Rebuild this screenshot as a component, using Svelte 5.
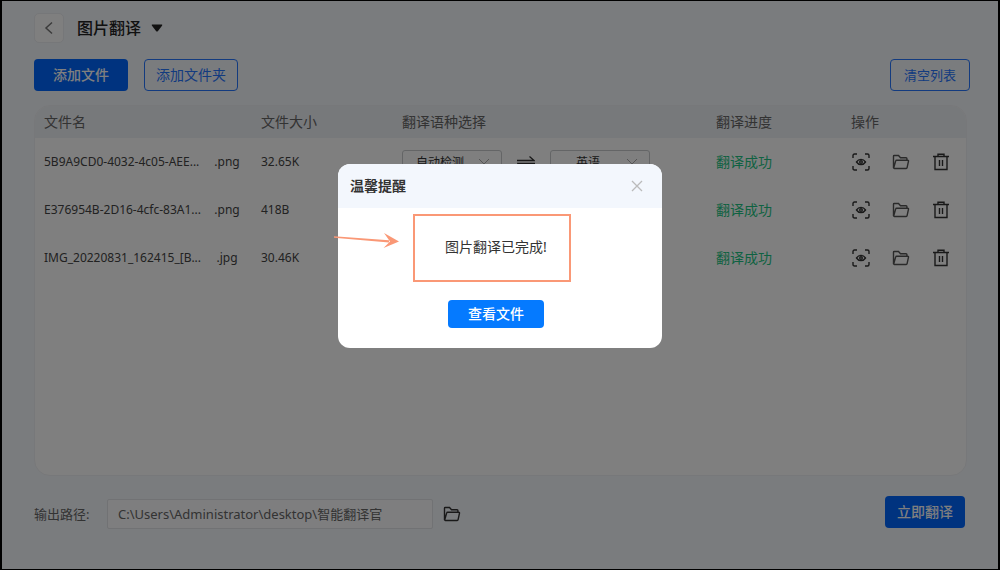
<script lang="ts">
  type FileRow = {
    id: number;
    name: string;
    ext: string;
    size: string;
    from: string;
    to: string;
  };

  let files = $state<FileRow[]>([
    { id: 1, name: "5B9A9CD0-4032-4c05-AEE...", ext: ".png", size: "32.65K", from: "自动检测", to: "英语" },
    { id: 2, name: "E376954B-2D16-4cfc-83A1...", ext: ".png", size: "418B", from: "自动检测", to: "英语" },
    { id: 3, name: "IMG_20220831_162415_[B...", ext: ".jpg", size: "30.46K", from: "自动检测", to: "英语" },
  ]);
  let outputPath = $state("C:\\Users\\Administrator\\desktop\\智能翻译官");
  let showDialog = $state(true);

  function removeFile(id: number) {
    files = files.filter((f) => f.id !== id);
  }
</script>

{#snippet folderIcon()}
  <svg class="icon" viewBox="0 0 18 18" aria-hidden="true">
    <path d="M1.5 15V3.2c0-.5.3-.7.7-.7h4.3l2 2.2h5.6c.5 0 .8.3.8.8v1.7M1.6 15.2l2.1-7.3c.1-.4.4-.6.8-.6h11.2c.6 0 .9.4.8.9l-1.4 6.5c-.1.5-.4.8-.9.8H2.3c-.5 0-.7-.2-.7-.6z" />
  </svg>
{/snippet}

{#snippet chevron()}
  <svg class="chevron" viewBox="0 0 12 8" aria-hidden="true">
    <path d="M1 1l5 5 5-5" />
  </svg>
{/snippet}

<div class="window">
  <header class="title-bar">
    <button class="back" aria-label="返回">
      <svg viewBox="0 0 10 14" aria-hidden="true"><path d="M8 1.5L2 7l6 5.5" /></svg>
    </button>
    <button class="mode">
      图片翻译
      <svg viewBox="0 0 12 8" aria-hidden="true"><path d="M1.5.5h9c.8 0 1 .6.5 1.2L7 7c-.6.7-1.4.7-2 0L1 1.7C.5 1.1.7.5 1.5.5z" /></svg>
    </button>
  </header>

  <div class="toolbar">
    <button class="btn primary">添加文件</button>
    <button class="btn outline">添加文件夹</button>
    <button class="btn outline clear" onclick={() => (files = [])}>清空列表</button>
  </div>

  <main class="card">
    <table>
      <thead>
        <tr>
          <th class="col-name">文件名</th>
          <th class="col-size">文件大小</th>
          <th>翻译语种选择</th>
          <th class="col-status">翻译进度</th>
          <th class="col-actions">操作</th>
        </tr>
      </thead>
      <tbody>
        {#each files as file (file.id)}
          <tr>
            <td>
              <div class="file">
                <span class="file-name">{file.name}</span>
                <span class="file-ext">{file.ext}</span>
              </div>
            </td>
            <td class="size">{file.size}</td>
            <td class="controls">
              <div class="langs">
                <div class="select">
                  <select bind:value={file.from} aria-label="源语言">
                    <option>自动检测</option>
                  </select>
                  {@render chevron()}
                </div>
                <svg class="swap" viewBox="0 0 18 12" aria-hidden="true">
                  <path d="M0 4.5h17L12.5.5M18 7.5H1l4.5 4" />
                </svg>
                <div class="select">
                  <select bind:value={file.to} aria-label="目标语言">
                    <option>英语</option>
                  </select>
                  {@render chevron()}
                </div>
              </div>
            </td>
            <td class="status">翻译成功</td>
            <td class="controls">
              <div class="actions">
                <button class="icon-btn" aria-label="预览">
                  <svg class="icon" viewBox="0 0 18 18" aria-hidden="true">
                    <path d="M1 5V2.5C1 1.5 1.5 1 2.5 1H5M13 1h2.5c1 0 1.5.5 1.5 1.5V5M17 13v2.5c0 1-.5 1.5-1.5 1.5H13M5 17H2.5C1.5 17 1 16.500 1 15.500V13" />
                    <path d="M4.5 9C6.8 5.500 11.200 5.500 13.500 9 11.200 12.500 6.800 12.500 4.500 9z" />
                    <circle cx="9" cy="9" r="1.3" />
                  </svg>
                </button>
                <button class="icon-btn folder" aria-label="打开文件夹">{@render folderIcon()}</button>
                <button class="icon-btn" aria-label="删除" onclick={() => removeFile(file.id)}>
                  <svg class="icon" viewBox="0 0 18 18" aria-hidden="true">
                    <path d="M1 3.500h16M6 3.300V1.300h6v2M3 3.500v13h12v-13M7.500 7v6M10.500 7v6" />
                  </svg>
                </button>
              </div>
            </td>
          </tr>
        {/each}
      </tbody>
    </table>
  </main>

  <footer>
    <div class="path">
      <label for="output-path">输出路径:</label>
      <input id="output-path" type="text" bind:value={outputPath} spellcheck="false" />
      <button class="icon-btn" aria-label="选择输出路径">{@render folderIcon()}</button>
    </div>
    <button class="btn primary start">立即翻译</button>
  </footer>

  {#if showDialog}
    <div class="overlay">
      <div class="dialog" role="dialog" aria-modal="true" aria-labelledby="dialog-title">
        <div class="dialog-head">
          <h2 id="dialog-title">温馨提醒</h2>
          <button class="close" aria-label="关闭" onclick={() => (showDialog = false)}>
            <svg viewBox="0 0 12 12" aria-hidden="true"><path d="M1 1l10 10M11 1L1 11" /></svg>
          </button>
        </div>
        <div class="dialog-body">
          <p>图片翻译已完成!</p>
          <button class="view" onclick={() => (showDialog = false)}>查看文件</button>
        </div>
        <!-- highlight box and arrow over the message -->
        <svg class="callout" viewBox="0 0 240 72" aria-hidden="true">
          <rect x="81" y="3" width="156" height="66" />
          <path d="M1 24.2L1 25.8 56 30.5 56 28.3z" />
          <path d="M51 21L66 29.5 50.5 36 57 29.5z" />
        </svg>
      </div>
    </div>
  {/if}
</div>

<style>
  :global(body) {
    margin: 0;
  }
  .window {
    position: relative;
    box-sizing: border-box;
    display: flex;
    flex-direction: column;
    min-height: 100vh;
    padding: 12px 31px 40px 32px;
    border: solid #000;
    border-width: 1px 2px;
    background: #f5f8fd;
    color: #333;
    font-family: "Noto Sans", "Noto Sans CJK SC", sans-serif;
    font-size: 14px;
  }
  button,
  input,
  select {
    font: inherit;
    color: inherit;
  }
  button {
    padding: 0;
    border: none;
    background: none;
    cursor: pointer;
  }
  svg {
    display: block;
    fill: none;
    stroke: currentColor;
  }
  .title-bar {
    display: flex;
    align-items: center;
    gap: 13px;
  }
  .back {
    display: grid;
    place-items: center;
    width: 30px;
    height: 30px;
    border: 1px solid #eceef2;
    border-radius: 5px;
    background: #fff;
    color: #777;
  }
  .back svg {
    width: 10px;
    height: 14px;
    stroke-width: 1.5;
  }
  .mode {
    display: flex;
    align-items: center;
    gap: 10px;
    color: #222;
    font-size: 16px;
    font-weight: 500;
    line-height: 24px;
  }
  .mode svg {
    width: 12px;
    height: 8px;
    fill: currentColor;
    stroke: none;
  }
  .toolbar {
    display: flex;
    gap: 16px;
    margin: 16px 0 14px;
  }
  .btn {
    box-sizing: border-box;
    width: 94px;
    height: 32px;
    padding-bottom: 2px;
    border-radius: 4px;
  }
  .primary {
    background: #0066ff;
    color: #fff;
    font-weight: 500;
  }
  .outline {
    border: 1px solid #2677ff;
    color: #2677ff;
  }
  .clear {
    width: 80px;
    margin: 0 -3px 0 auto;
    font-size: 13px;
  }
  .card {
    flex: 1;
    border: 1px solid #eff1f4;
    border-radius: 16px;
    background: #fff;
    overflow: hidden;
  }
  table {
    width: 100%;
    border-collapse: collapse;
    table-layout: fixed;
  }
  th,
  td {
    padding: 0 0 2px 9px;
    text-align: left;
    font-weight: 400;
  }
  th {
    height: 30px;
    background: #eff2f6;
    color: #666;
  }
  td {
    height: 46px;
  }
  .controls {
    height: 48px;
    padding-bottom: 0;
  }
  .col-name {
    width: 208px;
  }
  .col-size {
    width: 132px;
  }
  .col-status {
    width: 126px;
  }
  .col-actions {
    width: 115px;
  }
  .file {
    display: flex;
    gap: 4px;
    color: #444;
    font-size: 12px;
  }
  .file-name {
    width: 166px;
    white-space: nowrap;
  }
  .file-ext {
    width: 26px;
    text-align: center;
  }
  .size {
    color: #444;
    font-size: 12px;
  }
  .langs {
    display: flex;
    align-items: center;
    gap: 15px;
  }
  .select {
    display: grid;
    align-items: center;
    width: 100px;
  }
  .select > :global(*) {
    grid-area: 1 / 1;
  }
  select {
    box-sizing: border-box;
    width: 100%;
    height: 24px;
    padding: 0 24px 0 0;
    appearance: none;
    border: 1px solid #c8cacd;
    border-radius: 3px;
    background: #fff;
    font-size: 12px;
    text-align: center;
    text-align-last: center;
  }
  .chevron {
    justify-self: end;
    width: 12px;
    height: 8px;
    margin-right: 12px;
    color: #aaa;
    pointer-events: none;
  }
  .swap {
    width: 18px;
    height: 12px;
    stroke-width: 1.3;
  }
  .status {
    color: #1ec584;
  }
  .actions {
    display: flex;
    gap: 22px;
    padding-left: 1px;
  }
  .icon-btn {
    color: #333;
  }
  .folder {
    color: #555;
  }
  .icon {
    width: 18px;
    height: 18px;
    stroke-width: 1.4;
  }
  footer {
    display: flex;
    align-items: flex-start;
    justify-content: space-between;
    margin-top: 20px;
  }
  .path {
    display: flex;
    align-items: center;
    padding-top: 3px;
    color: #666;
    font-size: 13px;
  }
  .path label {
    width: 73px;
    padding-bottom: 2px;
  }
  .path input {
    box-sizing: border-box;
    width: 326px;
    height: 30px;
    margin-right: 10px;
    padding: 0 10px 2px;
    border: 1px solid #e2e4e8;
    border-radius: 2px;
    background: #fcfdff;
    outline: none;
  }
  .start {
    width: 80px;
    margin-right: 2px;
  }
  .overlay {
    position: absolute;
    inset: 0;
    display: flex;
    align-items: center;
    justify-content: center;
    padding-bottom: 58px;
    background: rgba(0, 0, 0, 0.5);
  }
  .dialog {
    position: relative;
    width: 324px;
    border-radius: 12px;
    background: #fff;
  }
  .dialog-head {
    display: flex;
    align-items: center;
    justify-content: space-between;
    height: 44px;
    padding: 0 19px 0 12px;
    border-radius: 12px 12px 0 0;
    background: #f3f7fd;
  }
  h2 {
    margin: 0;
    padding-bottom: 2px;
    font-size: 14px;
    font-weight: 700;
  }
  .close {
    color: #bbb;
  }
  .close svg {
    width: 12px;
    height: 12px;
    stroke-width: 1.3;
  }
  .dialog-body {
    display: flex;
    flex-direction: column;
    align-items: center;
    padding: 28px 8px 20px 0;
  }
  p {
    margin: 0 0 42px;
    line-height: 22px;
  }
  .view {
    width: 96px;
    height: 28px;
    padding-bottom: 2px;
    border-radius: 4px;
    background: #057aff;
    color: #fff;
    font-weight: 500;
  }
  .callout {
    position: absolute;
    top: 48px;
    left: -5px;
    width: 240px;
    height: 72px;
    color: #fa9876;
    pointer-events: none;
  }
  .callout rect {
    stroke-width: 2;
  }
  .callout path {
    fill: currentColor;
    stroke: none;
  }
</style>
